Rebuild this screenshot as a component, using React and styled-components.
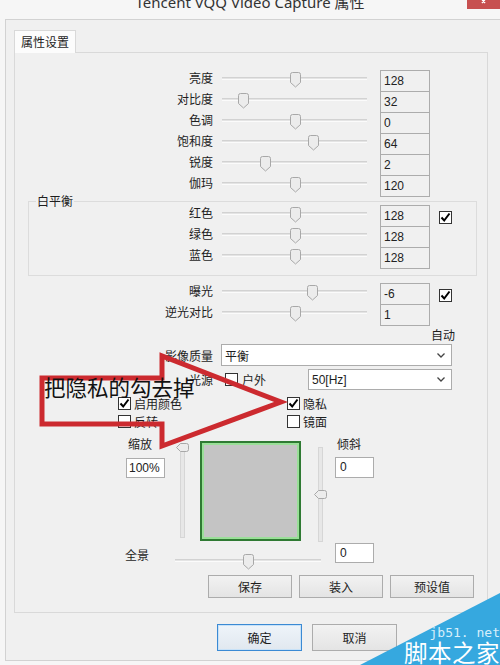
import React from 'react';
import styled, { createGlobalStyle, css } from 'styled-components';

const GlobalStyle = createGlobalStyle`
  html, body { margin: 0; padding: 0; background: #f6f6f6; }
  body {
    font-family: "Noto Sans CJK SC", "Noto Sans", sans-serif;
    font-size: 12px;
    color: #1e1e1e;
  }
  * { box-sizing: border-box; }
`;

const Screen = styled.div`
  position: relative;
  width: 500px;
  height: 665px;
  overflow: hidden;
  background: #f6f6f6;
`;

const TitleBar = styled.div`
  height: 19px;
  display: grid;
  grid-template-columns: 33px 1fr 33px;
  align-items: start;
  overflow: hidden;
`;

const Title = styled.div`
  grid-column: 2;
  text-align: center;
  font-family: "Noto Sans", "Noto Sans CJK SC", sans-serif;
  font-size: 15px;
  line-height: 20px;
  margin-top: -8px;
  color: #333;
  white-space: nowrap;
`;

const CloseButton = styled.div`
  grid-column: 3;
  height: 9px;
  background: #c75050;
  display: flex;
  justify-content: center;
`;

const Frame = styled.div`
  margin-left: 5px;
  height: 642px;
  border: 1px solid #d2d2d2;
  border-right: none;
  background: #f0f0f0;
  padding: 10px 0 0 8px;
`;

const TabStrip = styled.div`
  height: 22px;
  display: flex;
`;

const Tab = styled.div`
  position: relative;
  z-index: 1;
  width: 62px;
  height: 23px;
  border: 1px solid #d9d9d9;
  border-bottom: none;
  background: #fcfcfc;
  padding-left: 6px;
  line-height: 21px;
`;

const Panel = styled.div`
  width: 474px;
  height: 561px;
  border: 1px solid #d9d9d9;
  background: #f0f0f0;
  padding-top: 17px;
  display: flex;
  flex-direction: column;
`;

const SliderRow = styled.div`
  display: flex;
  align-items: flex-start;
  height: 21px;
`;

const RowLabel = styled.div`
  width: ${(p) => p.$w}px;
  text-align: right;
  white-space: nowrap;
  line-height: 15px;
`;

const Track = styled.div`
  position: relative;
  flex-shrink: 0;
  margin-left: ${(p) => p.$ml ?? 9}px;
  margin-top: ${(p) => p.$mt ?? 7}px;
  width: ${(p) => p.$w}px;
  height: 3px;
  background: #e4e4e4;
  border-top: 1px solid #d2d2d2;
  border-bottom: 1px solid #fbfbfb;
`;

const ThumbWrap = styled.div`
  position: absolute;
  top: -6px;
  width: 11px;
  height: 16px;
  display: flex;
`;

const VTrack = styled.div`
  position: relative;
  flex-shrink: 0;
  width: 5px;
  height: 95px;
  margin-left: ${(p) => p.$ml}px;
  margin-top: ${(p) => p.$mt}px;
  background: #e7e7e7;
  border: 1px solid #d6d6d6;
`;

const VThumbWrap = styled.div`
  position: absolute;
  left: -5px;
  width: 13px;
  height: 9px;
  display: flex;
`;

const ValueBox = styled.div`
  flex-shrink: 0;
  margin-left: ${(p) => p.$ml ?? 13}px;
  margin-top: ${(p) => p.$mt ?? 0}px;
  width: ${(p) => p.$w ?? 50}px;
  height: ${(p) => p.$h ?? 22}px;
  border: 1px solid #acacac;
  background: ${(p) => (p.$white ? '#ffffff' : '#f0f0f0')};
  padding-left: ${(p) => p.$pl ?? 3}px;
  line-height: ${(p) => (p.$h ?? 22) - 2}px;
  font-family: "Liberation Sans", "Noto Sans", sans-serif;
  font-size: 12px;
  color: #222;
`;

const CheckBox = styled.span`
  display: inline-flex;
  align-items: center;
  justify-content: center;
  flex-shrink: 0;
  width: 13px;
  height: 13px;
  border: 1px solid #333;
  background: #fff;
  margin-left: ${(p) => p.$ml ?? 0}px;
  margin-top: ${(p) => p.$mt ?? 0}px;
`;

const Group = styled.fieldset`
  margin: 1px 10px 0 13px;
  padding: 0 0 7px 0;
  border: 1px solid #dcdcdc;
  min-width: 0;
`;

const Legend = styled.legend`
  margin-left: 7px;
  padding: 0 1px;
  line-height: 8px;
  font-size: 12px;
`;

const Section = styled.div`
  margin-top: ${(p) => p.$mt ?? 0}px;
`;

const AutoLabel = styled.div`
  margin-top: 2px;
  line-height: 16px;
  padding-left: 416px;
`;

const FormRow = styled.div`
  display: flex;
  align-items: center;
  width: 437px;
  height: ${(p) => p.$h}px;
  margin-top: ${(p) => p.$mt}px;
`;

const Select = styled.div`
  display: flex;
  align-items: center;
  justify-content: space-between;
  width: ${(p) => p.$w}px;
  height: ${(p) => p.$h}px;
  margin-left: ${(p) => (p.$auto ? 'auto' : `${p.$ml}px`)};
  border: 1px solid #acacac;
  background: #fff;
  padding: 0 6px 0 3px;
  font-family: ${(p) => (p.$latin ? '"Liberation Sans", sans-serif' : 'inherit')};
`;

const InlineText = styled.span`
  margin-left: ${(p) => p.$ml ?? 0}px;
  white-space: nowrap;
  line-height: 15px;
`;

const CheckGrid = styled.div`
  margin-top: 7px;
  padding-left: 103px;
  display: grid;
  grid-template-columns: 169px auto;
  grid-auto-rows: 13px;
  row-gap: 5px;
`;

const CheckItem = styled.label`
  display: flex;
  align-items: center;
  gap: 3px;
  height: 13px;
  white-space: nowrap;
`;

const Lower = styled.div`
  display: flex;
  align-items: flex-start;
  height: 104px;
  margin-top: 10px;
`;

const SideCol = styled.div`
  display: flex;
  flex-direction: column;
  align-items: flex-start;
  flex-shrink: 0;
  width: ${(p) => p.$w}px;
  margin-left: ${(p) => p.$ml}px;
`;

const SmallLabel = styled.div`
  line-height: 12px;
  margin-left: ${(p) => p.$ml ?? 0}px;
`;

const Preview = styled.div`
  flex-shrink: 0;
  width: 101px;
  height: 100px;
  margin-left: 15px;
  margin-top: 3px;
  border: 2px solid #2f7a33;
  box-shadow: inset 0 0 0 2px #9adf98;
  background: #c4c4c4;
`;

const PanRow = styled.div`
  display: flex;
  align-items: flex-start;
  height: 20px;
  margin-top: 1px;
`;

const PanLabel = styled.div`
  width: 50px;
  margin-left: 110px;
  padding-top: 5px;
  line-height: 14px;
`;

const ButtonRow = styled.div`
  display: flex;
  gap: ${(p) => p.$gap}px;
  margin-top: ${(p) => p.$mt}px;
  margin-left: ${(p) => p.$ml}px;
`;

const Button = styled.div`
  display: flex;
  align-items: center;
  justify-content: center;
  width: ${(p) => p.$w}px;
  height: ${(p) => p.$h}px;
  border: 1px solid #acacac;
  background: linear-gradient(#f2f2f2, #e4e4e4);
  color: #1e1e1e;
  ${(p) =>
    p.$default &&
    css`
      border-color: #3b8ad4;
      box-shadow: inset 0 0 0 1px #c8e2f8;
      background: linear-gradient(#eef4fa, #e1e8ef);
    `}
`;

const Annotation = styled.div`
  position: absolute;
  left: 38px;
  top: 350px;
  width: 250px;
  height: 102px;
  pointer-events: none;
`;

const ArrowSvg = styled.svg`
  position: absolute;
  inset: 0;
`;

const AnnotationText = styled.div`
  position: absolute;
  left: 6px;
  top: 26px;
  font-family: "Noto Sans CJK SC", sans-serif;
  font-size: 21.5px;
  line-height: 22px;
  color: #111;
  white-space: nowrap;
`;

const Watermark = styled.div`
  position: absolute;
  right: 0;
  bottom: 0;
  width: 140px;
  height: 72px;
`;

const WatermarkShape = styled.svg`
  position: absolute;
  inset: 0;
`;

const WatermarkDomain = styled.div`
  position: absolute;
  right: 0;
  top: 33px;
  font-family: "DejaVu Sans Mono", monospace;
  font-size: 13px;
  line-height: 14px;
  color: #d6effb;
`;

const WatermarkName = styled.div`
  position: absolute;
  right: 0;
  top: 46px;
  font-family: "Noto Sans CJK SC", sans-serif;
  font-size: 23.5px;
  line-height: 26px;
  color: #ffffff;
  letter-spacing: 0.5px;
`;

const Check = () => (
  <svg width="11" height="11" viewBox="0 0 11 11">
    <path d="M1.5 5.5 L4.2 8.5 L9.5 1.5" fill="none" stroke="#000" strokeWidth="2" />
  </svg>
);

const Chevron = () => (
  <svg width="8" height="5" viewBox="0 0 8 5">
    <polyline points="0.5,0.5 4,4 7.5,0.5" fill="none" stroke="#444" strokeWidth="1.3" />
  </svg>
);

const Thumb = ({ left }) => (
  <ThumbWrap style={{ left }}>
    <svg width="11" height="16" viewBox="0 0 11 16">
      <path
        d="M0.5 2.5 Q0.5 0.5 2.5 0.5 H8.5 Q10.5 0.5 10.5 2.5 V10.5 L5.5 15 L0.5 10.5 Z"
        fill="#ececec"
        stroke="#a8a8a8"
      />
    </svg>
  </ThumbWrap>
);

const VThumb = ({ top }) => (
  <VThumbWrap style={{ top }}>
    <svg width="13" height="9" viewBox="0 0 13 9">
      <path
        d="M4.5 0.5 H10.5 Q12.5 0.5 12.5 2.5 V6.5 Q12.5 8.5 10.5 8.5 H4.5 L0.5 4.5 Z"
        fill="#ececec"
        stroke="#a8a8a8"
      />
    </svg>
  </VThumbWrap>
);

const TRACK_START = 222;

const SliderLine = ({ label, labelW, value, pos, checked }) => (
  <SliderRow>
    <RowLabel $w={labelW}>{label}</RowLabel>
    <Track $w={145}>
      <Thumb left={pos - 5 - TRACK_START} />
    </Track>
    <ValueBox>{value}</ValueBox>
    {checked && (
      <CheckBox $ml={9} $mt={6}>
        <Check />
      </CheckBox>
    )}
  </SliderRow>
);

const imageRows = [
  { label: '亮度', value: '128', pos: 295 },
  { label: '对比度', value: '32', pos: 243 },
  { label: '色调', value: '0', pos: 295 },
  { label: '饱和度', value: '64', pos: 313 },
  { label: '锐度', value: '2', pos: 265 },
  { label: '伽玛', value: '120', pos: 295 },
];

const whiteRows = [
  { label: '红色', value: '128', pos: 295, checked: true },
  { label: '绿色', value: '128', pos: 295 },
  { label: '蓝色', value: '128', pos: 295 },
];

const exposureRows = [
  { label: '曝光', value: '-6', pos: 312, checked: true },
  { label: '逆光对比', value: '1', pos: 295 },
];

const options = [
  { label: '启用颜色', checked: true },
  { label: '隐私', checked: true },
  { label: '反转', checked: false },
  { label: '镜面', checked: false },
];

export default function App() {
  return (
    <Screen>
      <GlobalStyle />
      <TitleBar>
        <Title>Tencent VQQ Video Capture 属性</Title>
        <CloseButton>
          <svg width="10" height="9" viewBox="0 0 10 9">
            <path d="M1 -3 L6 3 M8 -3 L3 3" stroke="#fff" strokeWidth="1.5" />
          </svg>
        </CloseButton>
      </TitleBar>

      <Frame>
        <TabStrip>
          <Tab>属性设置</Tab>
        </TabStrip>
        <Panel>
          <Section>
            {imageRows.map((r) => (
              <SliderLine key={r.label} labelW={198} {...r} />
            ))}
          </Section>

          <Group>
            <Legend>白平衡</Legend>
            {whiteRows.map((r) => (
              <SliderLine key={r.label} labelW={184} {...r} />
            ))}
          </Group>

          <Section $mt={7}>
            {exposureRows.map((r) => (
              <SliderLine key={r.label} labelW={198} {...r} />
            ))}
          </Section>

          <AutoLabel>自动</AutoLabel>

          <FormRow $h={22} $mt={1}>
            <RowLabel $w={198}>影像质量</RowLabel>
            <Select $w={231} $h={22} $ml={8}>
              <span>平衡</span>
              <Chevron />
            </Select>
          </FormRow>

          <FormRow $h={21} $mt={3}>
            <RowLabel $w={198}>光源</RowLabel>
            <CheckBox $ml={12} />
            <InlineText $ml={4}>户外</InlineText>
            <Select $w={144} $h={21} $auto $latin>
              <span>50[Hz]</span>
              <Chevron />
            </Select>
          </FormRow>

          <CheckGrid>
            {options.map((o) => (
              <CheckItem key={o.label}>
                <CheckBox>{o.checked && <Check />}</CheckBox>
                <span>{o.label}</span>
              </CheckItem>
            ))}
          </CheckGrid>

          <Lower>
            <SideCol $w={42} $ml={110}>
              <SmallLabel $ml={3}>缩放</SmallLabel>
              <ValueBox $ml={1} $mt={8} $w={39} $h={20} $white $pl={2}>
                100%
              </ValueBox>
            </SideCol>
            <VTrack $ml={13} $mt={5}>
              <VThumb top={-1} />
            </VTrack>
            <Preview />
            <VTrack $ml={17} $mt={9}>
              <VThumb top={42} />
            </VTrack>
            <SideCol $w={39} $ml={12}>
              <SmallLabel $ml={2}>倾斜</SmallLabel>
              <ValueBox $ml={0} $mt={7} $w={39} $h={21} $white $pl={4}>
                0
              </ValueBox>
            </SideCol>
          </Lower>

          <PanRow>
            <PanLabel>全景</PanLabel>
            <Track $w={146} $ml={0} $mt={16}>
              <Thumb left={68} />
            </Track>
            <ValueBox $ml={14} $w={39} $h={20} $white $pl={4}>
              0
            </ValueBox>
          </PanRow>

          <ButtonRow $gap={7} $mt={12} $ml={193}>
            <Button $w={84} $h={23}>保存</Button>
            <Button $w={84} $h={23}>装入</Button>
            <Button $w={84} $h={23}>预设值</Button>
          </ButtonRow>
        </Panel>

        <ButtonRow $gap={10} $mt={11} $ml={203}>
          <Button $w={85} $h={27} $default>确定</Button>
          <Button $w={85} $h={27}>取消</Button>
        </ButtonRow>
      </Frame>

      <Annotation>
        <ArrowSvg width="250" height="102" viewBox="0 0 250 102">
          <path
            d="M4 28 H124 V6 L243 52 L124 96 V74 H4 Z"
            fill="none"
            stroke="#cc2a2f"
            strokeWidth="5"
            strokeLinejoin="miter"
          />
        </ArrowSvg>
        <AnnotationText>把隐私的勾去掉</AnnotationText>
      </Annotation>

      <Watermark>
        <WatermarkShape width="140" height="72" viewBox="0 0 140 72">
          <polygon points="0,72 140,0 140,72" fill="#36a8df" />
        </WatermarkShape>
        <WatermarkDomain>jb51. net</WatermarkDomain>
        <WatermarkName>脚本之家</WatermarkName>
      </Watermark>
    </Screen>
  );
}
